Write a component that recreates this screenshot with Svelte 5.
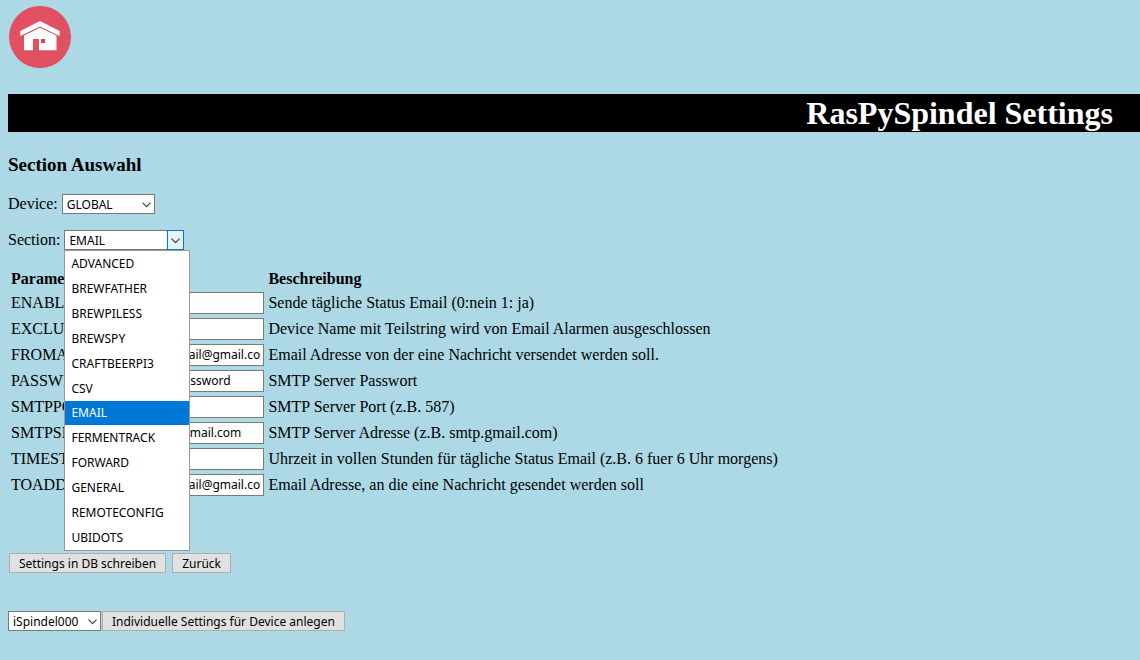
<script>
  const sections = [
    'ADVANCED', 'BREWFATHER', 'BREWPILESS', 'BREWSPY', 'CRAFTBEERPI3', 'CSV',
    'EMAIL', 'FERMENTRACK', 'FORWARD', 'GENERAL', 'REMOTECONFIG', 'UBIDOTS'
  ];
  const settings = [
    { name: 'ENABLESTATUS', value: '', text: 'Sende tägliche Status Email (0:nein 1: ja)' },
    { name: 'EXCLUDESTRING', value: '', text: 'Device Name mit Teilstring wird von Email Alarmen ausgeschlossen' },
    { name: 'FROMADDR', value: 'your.mail@gmail.com', text: 'Email Adresse von der eine Nachricht versendet werden soll.' },
    { name: 'PASSWD', value: 'yourpassword', text: 'SMTP Server Passwort' },
    { name: 'SMTPPORT', value: '', text: 'SMTP Server Port (z.B. 587)' },
    { name: 'SMTPSERVER', value: 'smtp.gmail.com', text: 'SMTP Server Adresse (z.B. smtp.gmail.com)' },
    { name: 'TIMESTATUS', value: '', text: 'Uhrzeit in vollen Stunden für tägliche Status Email (z.B. 6 fuer 6 Uhr morgens)' },
    { name: 'TOADDR', value: 'your.mail@gmail.com', text: 'Email Adresse, an die eine Nachricht gesendet werden soll' }
  ];
  let section = $state('EMAIL');
  let open = $state(true);

  function choose(name) {
    section = name;
    open = false;
  }
</script>

{#snippet chevron()}
  <svg class="chevron" viewBox="0 0 9 6" aria-hidden="true"><path d="M.5.7 4.5 4.7 8.5.7" /></svg>
{/snippet}

<main>
  <a class="home" href="/" aria-label="Home">
    <svg viewBox="0 0 62 62" aria-hidden="true">
      <circle cx="31" cy="31" r="31" fill="#e05060" />
      <path d="M31 15 11.300 25V30L31 20.500 50.700 30V25z" fill="#fff" />
      <path d="M31 21.700 15 29.500V44.300H24V33H30V44.300H47.500V29.500z" fill="#fff" />
      <path d="M32 33h4v4h-4z" fill="#e8404a" />
    </svg>
  </a>

  <h1>RasPySpindel Settings</h1>
  <h2>Section Auswahl</h2>

  <div class="field">
    <label for="device">Device:</label>
    <div class="picker small">
      <select id="device"><option>GLOBAL</option></select>
      <span class="arrow">{@render chevron()}</span>
    </div>
  </div>

  <div class="field">
    <label for="section">Section:</label>
    <div class="picker wide">
      <select id="section" bind:value={section}>
        {#each sections as name}<option>{name}</option>{/each}
      </select>
      <span class="arrow active">{@render chevron()}</span>
      {#if open}
        <div class="menu" role="listbox" aria-label="Section">
          {#each sections as name}
            <button type="button" role="option" aria-selected={name === section} class:selected={name === section} onclick={() => choose(name)}>{name}</button>
          {/each}
        </div>
      {/if}
    </div>
  </div>

  <table>
    <thead>
      <tr><th>Parameter</th><th>Wert</th><th>Beschreibung</th></tr>
    </thead>
    <tbody>
      {#each settings as s}
        <tr>
          <td><label for={s.name}>{s.name}</label></td>
          <td><input id={s.name} type="text" value={s.value} /></td>
          <td>{s.text}</td>
        </tr>
      {/each}
    </tbody>
  </table>

  <div class="actions">
    <button type="button" class="push">Settings in DB schreiben</button>
    <button type="button" class="push">Zurück</button>
  </div>

  <div class="create">
    <div class="picker small">
      <select aria-label="Device"><option>iSpindel000</option></select>
      <span class="arrow">{@render chevron()}</span>
    </div>
    <button type="button" class="push">Individuelle Settings für Device anlegen</button>
  </div>
</main>

<style>
  :global(body) {
    margin: 0;
    background: #add8e6;
  }
  main {
    padding: 6px 0 24px 8px;
    color: #000;
    font: 16px/18px "Liberation Serif", "Times New Roman", serif;
  }
  .home {
    display: block;
    width: 62px;
    height: 62px;
    margin-left: 1px;
  }
  .home svg {
    display: block;
    width: 100%;
  }
  h1 {
    margin: 26px 0 23px;
    padding: 0 27px 0 0;
    background: #000;
    color: #fff;
    font-size: 32px;
    line-height: 38px;
    text-align: right;
  }
  h2 {
    margin: 0 0 19px;
    font-size: 19px;
    line-height: 20px;
  }
  .field {
    display: flex;
    align-items: center;
    gap: 4px;
    margin-bottom: 16px;
  }
  select,
  input,
  button {
    box-sizing: border-box;
    margin: 0;
    border-radius: 0;
    color: #000;
    font: 12px/16px "Noto Sans", Tahoma, sans-serif;
  }
  .picker {
    position: relative;
  }
  .small {
    width: 93px;
  }
  .wide {
    width: 120px;
  }
  select {
    display: block;
    appearance: none;
    width: 100%;
    height: 20px;
    padding: 2px 18px 0 4px;
    border: 1px solid #7a7a7a;
    background: #fff;
    outline: none;
  }
  .arrow {
    position: absolute;
    top: 0;
    right: 0;
    box-sizing: border-box;
    display: flex;
    align-items: center;
    justify-content: center;
    width: 17px;
    height: 20px;
    padding-top: 1px;
    pointer-events: none;
  }
  .active {
    border: 1px solid #0078d7;
    background: #e5f1fb;
  }
  .chevron {
    flex: none;
    width: 9px;
    height: 6px;
    fill: none;
    stroke: #444;
    stroke-width: 1.2;
  }
  .menu {
    position: absolute;
    z-index: 1;
    top: 20px;
    left: 0;
    box-sizing: border-box;
    display: flex;
    flex-direction: column;
    width: 126px;
    height: 301px;
    border: 1px solid #999;
    background: #fff;
  }
  .menu button {
    flex: 1;
    width: 100%;
    padding: 1px 6px 0;
    border: 0;
    background: #fff;
    text-align: left;
  }
  .menu .selected {
    background: #0078d7;
    color: #fff;
  }
  table {
    border-spacing: 2px;
    margin-top: 17px;
  }
  th,
  td {
    padding: 1px;
    text-align: left;
    white-space: nowrap;
  }
  input {
    display: block;
    width: 117px;
    height: 22px;
    padding: 0 2px 1px;
    border: 1px solid #7a7a7a;
    background: #fff;
  }
  .push {
    height: 20px;
    padding: 2px 9px 0;
    border: 1px solid #adadad;
    background: #e1e1e1;
    white-space: nowrap;
  }
  .actions {
    display: flex;
    gap: 6px;
    margin: 54px 0 38px 1px;
  }
  .create {
    display: flex;
    gap: 1px;
  }
</style>
